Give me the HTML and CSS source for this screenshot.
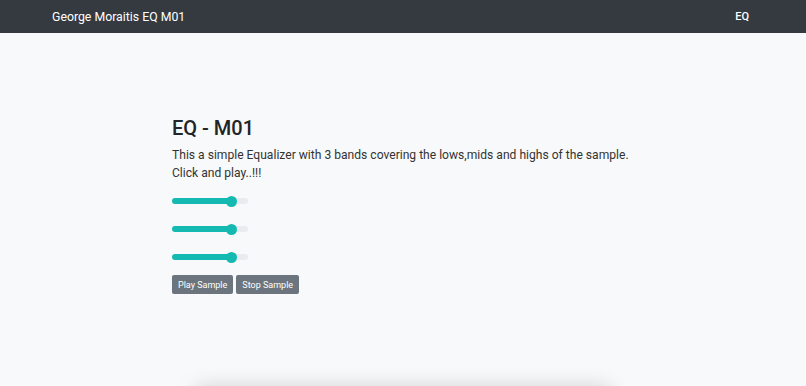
FILE: index.html
```html
<!DOCTYPE html>
<html lang="en">

<head>
    <meta charset="UTF-8">
    <meta name="viewport" content="width=device-width, initial-scale=1.0">
    <title>EQ M01</title>
    <link rel="stylesheet" href="styles.css">
</head>

<body>
    <nav class="navbar">
        <span class="brand">George Moraitis EQ M01</span>
        <span class="navLink">EQ</span>
    </nav>

    <div class="jumbotron">
        <div class="content">
            <h1 class="title">EQ - M01</h1>
            <p class="lead">This a simple Equalizer with 3 bands covering the lows,mids and highs of the sample.<br>Click and play..!!!</p>
            <div class="bands">
                <div class="slider">
                    <div class="fill" style="width: 59px;"></div>
                    <div class="thumb"></div>
                </div>
                <div class="slider">
                    <div class="fill" style="width: 59px;"></div>
                    <div class="thumb"></div>
                </div>
                <div class="slider">
                    <div class="fill" style="width: 59px;"></div>
                    <div class="thumb"></div>
                </div>
            </div>
            <div class="buttons">
                <button class="btn">Play Sample</button>
                <button class="btn">Stop Sample</button>
            </div>
        </div>
    </div>
    <div class="card"></div>
</body>

</html>
```

FILE: styles.css
```css
*{
    margin: 0;
    padding: 0;
    box-sizing: border-box;
}
body{
    font-family: Roboto, "Liberation Sans", sans-serif;
    background-color: #f8f9fa;
    color: #212529;
}
.navbar{
    height: 33px;
    background-color: #343a40;
    display: flex;
    justify-content: space-between;
    align-items: center;
    padding: 0 57px 0 52px;
    color: white;
}
.brand{
    font-size: 12.3px;
}
.navLink{
    font-size: 11px;
    font-weight: 500;
}
.jumbotron{
    padding: 83px 0 0 172px;
    height: 353px;
}
.title{
    font-size: 20px;
    font-weight: 500;
    line-height: 24px;
    margin-bottom: 6px;
}
.lead{
    font-size: 12.1px;
    line-height: 18px;
    color: #333;
}
.bands{
    display: flex;
    flex-direction: column;
    gap: 22px;
    margin-top: 16px;
}
.slider{
    position: relative;
    width: 76px;
    height: 6px;
    border-radius: 3px;
    background-color: #e9ecef;
}
.fill{
    height: 100%;
    border-radius: 3px;
    background-color: #14bab2;
}
.thumb{
    position: absolute;
    top: -2.5px;
    left: 53.5px;
    width: 11px;
    height: 11px;
    border-radius: 50%;
    background-color: #14bab2;
}
.buttons{
    display: flex;
    gap: 3px;
    margin-top: 15px;
}
.btn{
    font-family: inherit;
    font-size: 9px;
    color: white;
    background-color: #6c757d;
    border: none;
    border-radius: 2px;
    padding: 0 6px;
    height: 19px;
}
.card{
    margin: 0 196px;
    height: 60px;
    background-color: #f8f9fa;
    box-shadow: 0 0 20px rgba(0, 0, 0, 0.15);
}
```
